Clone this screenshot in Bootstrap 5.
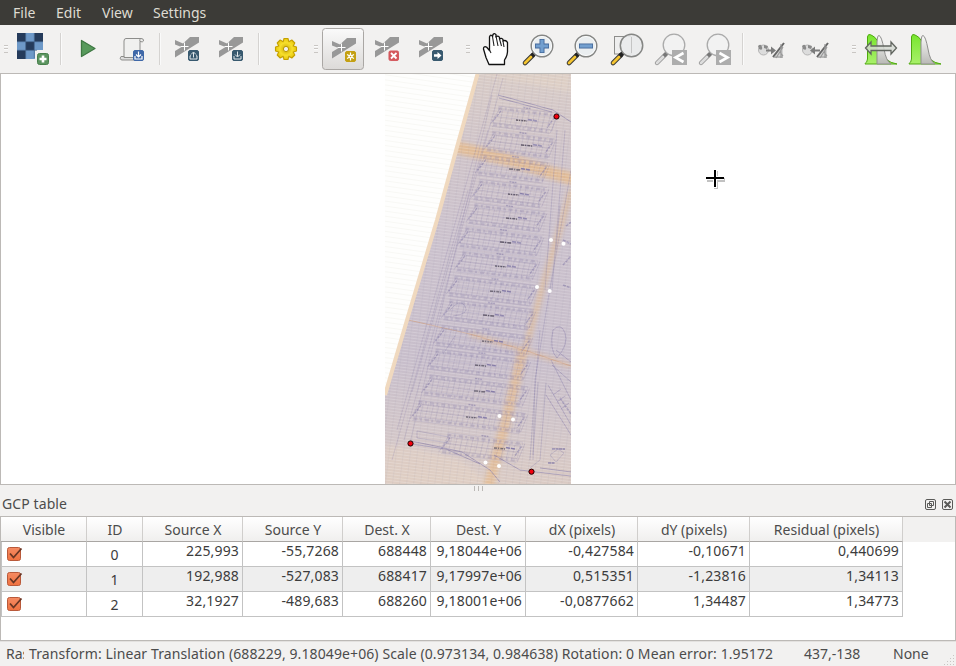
<!DOCTYPE html>
<html lang="en">
<head>
<meta charset="utf-8">
<title>Georeferencer</title>
<meta name="viewport" content="width=device-width, initial-scale=1">
<link href="https://cdn.jsdelivr.net/npm/bootstrap@5.3.0/dist/css/bootstrap.min.css" rel="stylesheet">
<style>
body{font-family:"Noto Sans","Open Sans",sans-serif;font-size:14px;line-height:20px;color:#4c4c4c;background:#f2f1f0;width:956px;height:666px;overflow:hidden}
.menu-strip{height:25px;background:#3c3b37;color:#dfdbd2;padding-left:13px;flex:none}
.menu-strip .nav-link{padding:0;color:inherit;line-height:25px;font-size:14px}
.menu-strip .nav-link:nth-child(1){width:43px}
.menu-strip .nav-link:nth-child(2){width:46px}
.menu-strip .nav-link:nth-child(3){width:51px}
.tools{height:48px;flex:none}
.tool{width:44px;height:48px;padding:0;border:0;border-radius:0;flex:none;line-height:0}
.tool svg{display:block}
.rule{width:11px;flex:none;padding-left:5px}
.rule::before{content:"";display:block;width:1px;height:32px;background:#d5d3d1;box-shadow:1px 0 #fafafa}
.grip{flex:none;height:8px;background:repeating-linear-gradient(#c9c6c3 0 1px,#fbfbfb 1px 2px,transparent 2px 3.5px);width:4px;margin:0 3px 0 4px}
.grip-b{margin-left:6px}
.grip-c{margin-left:13px}
.grip-d{margin:0 2px 0 16px}
.canvas-view{height:412px;flex:none;border:1px solid #bcb9b6;background:#fff;padding-left:384px}
.split{height:7px;flex:none;gap:2px;padding:1px 0 0 2px}
.split i{width:1px;height:5px;background:#bbb8b5;margin-right:1px}
.dock-title{height:24px;padding:0 3px 0 2px;flex:none;letter-spacing:.1px}
.gcp-box{height:125px;flex:none;border:1px solid #bcb9b6;background:#fff}
.gcp-head{background:#f2f1f0}
.gcp-table{width:902px;table-layout:fixed;margin:0;color:#3c3c3c;border-collapse:separate;border-spacing:0;--bs-table-bg:transparent}
.gcp-table th{height:25px;padding:1px 0 0 1px;font-weight:400;text-align:center;color:#4c4c4c;border:0;border-right:1px solid #d0cecc;border-bottom:1px solid #a9a6a3;background:linear-gradient(#fff,#f0efee);line-height:23px}
.gcp-table td{height:25px;padding:0 3px 0 0;text-align:right;vertical-align:top;line-height:17px;border:0;border-right:1px solid #c3c3c3;border-bottom:1px solid #c3c3c3;letter-spacing:.16px}
.gcp-table td:first-child{text-align:left;padding:4px 0 0 4px;border-left:1px solid #c3c3c3}
.gcp-table td:nth-child(2){text-align:center;padding:4px 0 0}
.gcp-table tr.alt td{background:#eee}
.status{height:25px;flex:none;border-top:1px solid #e3e1df;padding-left:6px}
.status span{white-space:pre;line-height:24px;flex:none}
.status .raster{width:18px}
.status .transform{margin-left:5px;width:775px;letter-spacing:.104px}
.status .coords{width:89px}
.cross{left:705px;top:169px}
</style>
</head>
<body class="d-flex flex-column position-relative">
<svg width="0" height="0" class="position-absolute">
 <defs>
  <linearGradient id="green" x2="0" y2="1"><stop stop-color="#78e62e"/><stop offset="1" stop-color="#a9f06a"/></linearGradient>
  <linearGradient id="silver" x2="0" y2="1"><stop stop-color="#fafafa"/><stop offset="1" stop-color="#b9b9b5"/></linearGradient>
  <linearGradient id="press" x2="0" y2="1"><stop stop-color="#fafafa"/><stop offset="1" stop-color="#dcdad8"/></linearGradient>
  <radialGradient id="gold"><stop stop-color="#c9a800"/><stop offset=".6" stop-color="#f7df2c"/><stop offset="1" stop-color="#e8c70c"/></radialGradient>
  <linearGradient id="orange" x2="0" y2="1"><stop stop-color="#f58b63"/><stop offset="1" stop-color="#f0713f"/></linearGradient>
  <symbol id="gcp" viewBox="0 0 24 24" overflow="visible">
   <path d="M15 0H24V5.500L0 20.500V14L6.500 10L0 7.500V3L8 6.500Z" fill="#989898"/><path d="M5.500 9.500H13.500M9.500 5.500V13.500" stroke="#fff" stroke-width="1"/>
  </symbol>
  <symbol id="badge" viewBox="0 0 11 11" overflow="visible"><rect x=".5" y=".5" width="10" height="10" rx="1.5" fill="currentColor" stroke="currentColor"/></symbol>
  <symbol id="lens" viewBox="0 0 44 48" overflow="visible">
   <path d="M16 30L8 38" stroke="#333" stroke-width="4.6" stroke-linecap="round"/><path d="M14 32L8 38" stroke="#f4c430" stroke-width="2.8" stroke-linecap="round"/><path d="M18 28L15 31" stroke="#222" stroke-width="4"/>
   <circle cx="25" cy="21" r="10.8" fill="#e9edf0" fill-opacity=".85" stroke="#858684" stroke-width="1.4"/><circle cx="25" cy="21" r="9.6" fill="none" stroke="#fff" stroke-opacity=".8"/>
  </symbol>
  <symbol id="lens-off" viewBox="0 0 44 48" overflow="visible">
   <path d="M17 29L8 38" stroke="#999" stroke-width="4.4" stroke-linecap="round"/><path d="M14 32L8 38" stroke="#ddd" stroke-width="2.6" stroke-linecap="round"/><path d="M18 28L15 31" stroke="#777" stroke-width="3.5"/>
   <circle cx="25" cy="20" r="10.8" fill="#f2f2f2" stroke="#aaa" stroke-width="1.3"/><rect x="23" y="25" width="15" height="15" fill="#adadad"/>
  </symbol>
  <symbol id="globe" viewBox="0 0 44 48" overflow="visible">
   <circle cx="15.5" cy="25" r="5" fill="#dcdcdc" stroke="#b4b4b4"/><path d="M10 21q3-3 4 1t-3 2zM16 20l4 1-1 3-3-1z" fill="#8a8a8a"/>
   <path d="M25 31L35 18V33H25Z" fill="#d4d4d4"/><path d="M25 32L36 18" stroke="#666" stroke-width="2"/><path d="M28 33L35 22M33 19V33M26 32H35M32 27l3 4" stroke="#999" stroke-width="1.2"/>
  </symbol>
  <symbol id="tick" viewBox="0 0 17 17" overflow="visible"><rect x="1.5" y="1.5" width="13" height="13" rx="2" fill="url(#orange)" stroke="#b9593a"/><path d="M4 7.5L7.5 11.5L15.5 2.5" fill="none" stroke="#673524" stroke-width="1.8"/></symbol>
 </defs>
</svg>

<nav class="nav menu-strip">
 <a class="nav-link">File</a><a class="nav-link">Edit</a><a class="nav-link">View</a><a class="nav-link">Settings</a>
</nav>

<div class="tools d-flex align-items-center" role="toolbar">
 <div class="grip"></div>
 <button class="btn tool"><svg width="44" height="48" viewBox="11 25 44 48">
  <path d="M17 33H43V50H35V59H17Z" fill="#6e99c8"/><path d="M17 33h8.700v8.700H17zM34.300 33H43v8.700h-8.700zM25.700 41.700h8.600v8.600h-8.600zM17 50.300h8.700V59H17z" fill="#253b5b"/><path d="M25.700 33V59M34.300 33V58M17 41.700H43M17 50.300H37" stroke="#47698f" stroke-width=".7"/>
  <rect x="37.500" y="53.500" width="11" height="11" rx="2" fill="#5c9460" stroke="#47804b"/><path d="M43 55.500v7M39.500 59h7" stroke="#fff" stroke-width="2.600"/></svg></button>
 <div class="rule"></div>
 <button class="btn tool"><svg width="44" height="48" viewBox="66 25 44 48"><path d="M81.500 40.500L95 48.500L81.500 56.500Z" fill="#589a5c" stroke="#3f7843" stroke-width="1.300" stroke-linejoin="round"/></svg></button>
 <button class="btn tool"><svg width="44" height="48" viewBox="110 25 44 48"><path d="M126 38.500H141q3 0 2.500 2.500-.7 1.500-3.500.5V58H124V41q0-2.500 2-2.500Z" fill="#f0f0ef" stroke="#8d8d8b"/><path d="M141 38.500q-2 1-1 3" fill="none" stroke="#8d8d8b"/><path d="M124 56.500H121q-2 3 1 3.500H139V57.500H124Z" fill="#ddd" stroke="#8d8d8b"/><g color="#3f68a8"><use href="#badge" x="133" y="50" width="11" height="11"/></g><path d="M138.500 51.500v5M136 54.500l2.500 2.500 2.500-2.500M135 56v3h7v-3" fill="none" stroke="#fff" stroke-width="1.200"/></svg></button>
 <div class="rule"></div>
 <button class="btn tool"><svg width="44" height="48" viewBox="165 25 44 48"><use href="#gcp" x="175" y="37" width="24" height="24"/><g color="#38596f"><use href="#badge" x="188" y="50" width="11" height="11"/></g><path d="M193.500 57.500v-5M191 54.500l2.500-2.500 2.500 2.500M191 55.800H190V59h7v-3.200H196" fill="none" stroke="#dfe6ea" stroke-width="1"/></svg></button>
 <button class="btn tool"><svg width="44" height="48" viewBox="209 25 44 48"><use href="#gcp" x="219" y="37" width="24" height="24"/><g color="#38596f"><use href="#badge" x="232" y="50" width="11" height="11"/></g><path d="M237.500 51.500v5M235 54.500l2.500 2.500 2.500-2.500M234 56v3h7v-3" fill="none" stroke="#dfe6ea" stroke-width="1"/></svg></button>
 <div class="rule"></div>
 <button class="btn tool"><svg width="44" height="48" viewBox="264 25 44 48"><g transform="translate(286 49)"><path d="M-2-10.500H2L2.800-7.300 5.800-9 8.800-6 7.200-3 10.500-2V2L7.200 3 8.800 6 5.800 9 2.800 7.300 2 10.500H-2L-2.800 7.300-5.800 9-8.800 6-7.200 3-10.500 2V-2L-7.200-3-8.800-6-5.800-9-2.800-7.300Z" fill="url(#gold)" stroke="#c4a000" stroke-width="1.100" stroke-linejoin="round"/><circle r="2.600" fill="#f2f1f0" stroke="#b89600"/></g></svg></button>
 <div class="grip grip-b"></div>
 <button class="btn tool"><svg width="44" height="48" viewBox="321 25 44 48"><rect x="322.500" y="28.500" width="41" height="41" rx="3" fill="url(#press)" stroke="#aaa7a4"/><use href="#gcp" x="332" y="38" width="24" height="24"/><g color="#c4a012"><use href="#badge" x="345" y="51" width="11" height="11"/></g><path d="M350.500 52.500v8M347 54.500l7 4M354 54.500l-7 4" stroke="#fff" stroke-width="1.200"/><circle cx="350.500" cy="56.500" r="2" fill="#fff"/><circle cx="350.500" cy="56.500" r=".8" fill="#c4a012"/></svg></button>
 <button class="btn tool"><svg width="44" height="48" viewBox="365 25 44 48"><use href="#gcp" x="375" y="37" width="24" height="24"/><g color="#d4585c"><use href="#badge" x="388.500" y="50.500" width="10.500" height="10.500"/></g><path d="M391 53l5.500 5.500M396.500 53L391 58.500" stroke="#fff" stroke-width="1.800"/></svg></button>
 <button class="btn tool"><svg width="44" height="48" viewBox="409 25 44 48"><use href="#gcp" x="419" y="37" width="24" height="24"/><g color="#38596f"><use href="#badge" x="432" y="50" width="11" height="11"/></g><path d="M434 54.300h3.500V52L441.500 55.500L437.500 59V56.700H434Z" fill="#fff"/></svg></button>
 <div class="grip grip-c"></div>
 <button class="btn tool"><svg width="44" height="48" viewBox="473 25 44 48"><path d="M489 64.500L486 57.500L483.500 49q-.2-3 3-2l3 3.500L489.500 37q1-3.500 3-.5L493 34.500q1.500-2 3 .2V37q2-2 3.500.3V39q2-1.500 3.500.5V41q3-1.500 4.500 1.500V49q.5 6-3 11V64.500Z" fill="#fff" stroke="#111" stroke-width="1.300" stroke-linejoin="round"/><path d="M492.500 36.500L494 46M496 36L498 46M499.500 39L501.500 46M503 41L504 47M489.500 50L491 53" stroke="#222" stroke-width="1.100"/></svg></button>
 <button class="btn tool"><svg width="44" height="48" viewBox="0 0 44 48"><use href="#lens" width="44" height="48"/><path d="M25 14v14M18 21h14" stroke="#44699b" stroke-width="5"/><path d="M25 14.800v12.400M18.800 21h12.400" stroke="#729fcf" stroke-width="3.200"/></svg></button>
 <button class="btn tool"><svg width="44" height="48" viewBox="0 0 44 48"><use href="#lens" width="44" height="48"/><path d="M18 21h14" stroke="#44699b" stroke-width="5"/><path d="M18.800 21h12.400" stroke="#729fcf" stroke-width="3.200"/></svg></button>
 <button class="btn tool"><svg width="44" height="48" viewBox="0 0 44 48"><rect x="9.500" y="11.500" width="17" height="17.500" fill="#eee" stroke="#8d8d8b"/><path d="M16 30L8 38" stroke="#333" stroke-width="4.600" stroke-linecap="round"/><path d="M14 32L8 38" stroke="#f4c430" stroke-width="2.800" stroke-linecap="round"/><path d="M18 28L15 31" stroke="#222" stroke-width="4"/><circle cx="26.500" cy="20.500" r="11.200" fill="#e9ebec" fill-opacity=".93" stroke="#858684" stroke-width="1.500"/><path d="M26.500 12v16" stroke="#c4c4c4"/></svg></button>
 <button class="btn tool"><svg width="44" height="48" viewBox="0 0 44 48"><use href="#lens-off" width="44" height="48"/><path d="M34.500 28L26.500 32.500L34.500 37" fill="none" stroke="#fff" stroke-width="2.600"/></svg></button>
 <button class="btn tool"><svg width="44" height="48" viewBox="0 0 44 48"><use href="#lens-off" width="44" height="48"/><path d="M26.500 28L34.500 32.500L26.500 37" fill="none" stroke="#fff" stroke-width="2.600"/></svg></button>
 <div class="rule"></div>
 <button class="btn tool"><svg width="44" height="48" viewBox="0 0 44 48"><use href="#globe" width="44" height="48"/><path d="M18 24.500h5v-3l5 4-5 4v-3h-5z" fill="#7c7c7c"/></svg></button>
 <button class="btn tool"><svg width="44" height="48" viewBox="0 0 44 48"><use href="#globe" width="44" height="48"/><path d="M28 24.500h-5v-3l-5 4 5 4v-3h5z" fill="#7c7c7c"/></svg></button>
 <div class="grip grip-d"></div>
 <button class="btn tool"><svg width="44" height="48" viewBox="858 25 44 48"><g id="histo"><path d="M865 63.500Q867 63 867.500 59V37Q868 33 872 35.500Q878 38 881 50Q884 62 897 64H865Z" fill="url(#green)" stroke="#4ea80f"/><path d="M877 64V42Q877.500 35 879 35.500Q881.500 36 884 49Q886 61 891 64Z" fill="url(#silver)" stroke="#8f8f8d"/></g><path d="M865.500 48L871 42V46H891V42L896.500 48L891 54V50.500H871V54Z" fill="#d5d9d2" fill-opacity=".85" stroke="#626660" stroke-width="1.300"/></svg></button>
 <button class="btn tool"><svg width="44" height="48" viewBox="858 25 44 48"><use href="#histo"/></svg></button>
</div>

<main class="canvas-view">
 <svg id="map" class="d-block" width="186" height="410" viewBox="385 74 186 410">
  <defs>
   <linearGradient id="paper" x1="0" y1="0" x2="0" y2="1"><stop stop-color="#d8cbc6"/><stop offset=".18" stop-color="#cfc3c8"/><stop offset=".42" stop-color="#cac0cc"/><stop offset=".7" stop-color="#c8becb"/><stop offset=".87" stop-color="#d1c5c8"/><stop offset="1" stop-color="#dacac3"/></linearGradient>
   <pattern id="weave" width="7" height="3" patternUnits="userSpaceOnUse" patternTransform="rotate(7)"><path d="M0 .5H7" stroke="#fff" stroke-opacity=".2"/><path d="M.5 0V3" stroke="#8f84a8" stroke-opacity=".08"/></pattern>
   <pattern id="faint" width="8" height="5" patternUnits="userSpaceOnUse" patternTransform="rotate(8)"><path d="M0 .5H8" stroke="#f6f6f3" stroke-width=".8"/></pattern>
   <filter id="soft"><feGaussianBlur stdDeviation="2"/></filter>
   <filter id="ink"><feGaussianBlur stdDeviation=".35"/></filter>
  </defs>
  <path d="M385 74H571V484H385Z" fill="url(#paper)"/>
  <path d="M478 74H571V92L500 78Z" fill="#e3d3c4" opacity=".5" filter="url(#soft)"/>
  <path d="M385 445L415 448L460 460L490 484H385Z" fill="#e6d3c2" opacity=".45" filter="url(#soft)"/>
  <g fill="none" stroke="#e6b988" filter="url(#soft)" opacity=".78">
   <path d="M452 146L520 163L575 180" stroke-width="12"/><path d="M571 190L561 225L544 282L525 350" stroke-width="6" opacity=".7"/><path d="M523 350L507 417L488 488" stroke-width="10" opacity=".85"/>
   <path d="M470 334L520 349L571 366" stroke-width="5" opacity=".6"/>
  </g>
  <path d="M404 319L470 334L530 352L571 366" fill="none" stroke="#cfa184" stroke-width="1" opacity=".7"/>
  <g id="plots" fill="none" stroke="#877da8" filter="url(#ink)"></g>
  <path d="M385 74H571V484H385Z" fill="url(#weave)"/>
  <path d="M385 74H477L456 147L436 220L406 320L385 393Z" fill="#fefefd"/><path d="M385 74H477L456 147L436 220L406 320L385 393Z" fill="url(#faint)"/>
  <path d="M477.500 74L457 147L437 220L407 320L385 395" fill="none" stroke="#f0d9bf" stroke-width="4"/>
  <g fill="#fff"><circle cx="551" cy="240" r="2"/><circle cx="563.500" cy="243.700" r="2"/><circle cx="537" cy="287" r="2"/><circle cx="549.700" cy="291" r="2"/><circle cx="499.500" cy="416" r="2"/><circle cx="513" cy="419.500" r="2"/><circle cx="485.500" cy="462.500" r="2"/><circle cx="499" cy="466" r="2"/></g>
  <g fill="#f2000d" stroke="#1a0000"><circle cx="556.500" cy="116.500" r="2.600"/><circle cx="410.500" cy="443.500" r="2.600"/><circle cx="531.500" cy="471.700" r="2.600"/></g>
 </svg>
</main>
<div class="split d-flex justify-content-center"><i></i><i></i><i></i></div>
<div class="dock-title d-flex align-items-center">
 <span class="me-auto">GCP table</span>
 <svg width="28" height="11" viewBox="0 0 28 11" fill="none" stroke="#5a5a58"><rect x=".5" y=".5" width="10" height="10" rx="1.500"/><path d="M4.500 2.500h4v4h-4zM2.500 4.500h4v4h-4z"/><rect x="17.500" y=".5" width="10" height="10" rx="1.500"/><path d="M19.500 2.500l6 6M25.500 2.500l-6 6" stroke-width="2"/></svg>
</div>
<section class="gcp-box">
 <div class="gcp-head">
 <table class="table gcp-table">
  <colgroup><col style="width:86px"><col style="width:56px"><col style="width:100px"><col style="width:100px"><col style="width:88px"><col style="width:95px"><col style="width:112px"><col style="width:112px"><col style="width:153px"></colgroup>
  <thead><tr><th>Visible</th><th>ID</th><th>Source X</th><th>Source Y</th><th>Dest. X</th><th>Dest. Y</th><th>dX (pixels)</th><th>dY (pixels)</th><th>Residual (pixels)</th></tr></thead>
 </table>
 </div>
 <table class="table gcp-table">
  <colgroup><col style="width:86px"><col style="width:56px"><col style="width:100px"><col style="width:100px"><col style="width:88px"><col style="width:95px"><col style="width:112px"><col style="width:112px"><col style="width:153px"></colgroup>
  <tbody>
   <tr><td><svg class="d-block" width="17" height="17"><use href="#tick"/></svg></td><td>0</td><td>225,993</td><td>-55,7268</td><td>688448</td><td>9,18044e+06</td><td>-0,427584</td><td>-0,10671</td><td>0,440699</td></tr>
   <tr class="alt"><td><svg class="d-block" width="17" height="17"><use href="#tick"/></svg></td><td>1</td><td>192,988</td><td>-527,083</td><td>688417</td><td>9,17997e+06</td><td>0,515351</td><td>-1,23816</td><td>1,34113</td></tr>
   <tr><td><svg class="d-block" width="17" height="17"><use href="#tick"/></svg></td><td>2</td><td>32,1927</td><td>-489,683</td><td>688260</td><td>9,18001e+06</td><td>-0,0877662</td><td>1,34487</td><td>1,34773</td></tr>
  </tbody>
 </table>
</section>
<footer class="status d-flex">
 <span class="raster overflow-hidden">Ras</span><span class="transform">Transform: Linear Translation (688229, 9.18049e+06) Scale (0.973134, 0.984638) Rotation: 0 Mean error: 1.95172</span><span class="coords">437,-138</span><span>None</span>
 <svg class="ms-auto align-self-end" width="12" height="12" fill="#c9c6c3"><path d="M9 1h1v1H9zM6 4h1v1H6zM9 4h1v1H9zM3 7h1v1H3zM6 7h1v1H6zM9 7h1v1H9zM0 10h1v1H0zM3 10h1v1H3zM6 10h1v1H6zM9 10h1v1H9z"/></svg>
</footer>
<svg class="cross position-absolute" width="22" height="22"><path d="M11 2V20M2 11H20" stroke="#999" stroke-opacity=".6" stroke-width="4"/><path d="M10 0V19M0 9H19" stroke="#fff" stroke-width="4"/><path d="M10 1V18M1 9H19" stroke="#000" stroke-width="2"/></svg>

<script src="https://cdn.jsdelivr.net/npm/bootstrap@5.3.0/dist/js/bootstrap.bundle.min.js"></script>
<script>
// City blocks: left x, right x, centre y, label x
const blocks = [[497,555,120,522],[491,553,145,527],[482,547,169,515],[478,546,194,514],[473,544,218,512],[464,541,242,506],[461,537,266,501],[453,535,291,496],[448,533,315,489],[440,530,341,488],[434,528,365,481],[428,527,391,480],[417,525,417,472],[446,522,448,500]];
let out = '';
const line = (d, w, o, extra = '') => { out += `<path d="${d}" stroke-width="${w}" opacity="${o}" ${extra}/>`; };
blocks.forEach(([l, r, y, t], i) => {
  const h = 8.5, m = (l + r) / 2;
  out += `<g transform="rotate(7 ${m} ${y})">`;
  line(`M${l} ${y-h}H${r}M${l-3} ${y+h}H${r-3}`, 3, .3, 'stroke-dasharray="4 2.5 2 3"');
  line(`M${l} ${y-h-2}H${r}M${l} ${y-h+2}H${r}M${l-3} ${y}H${r-3}M${l-4} ${y+h-2}H${r-4}M${l-4} ${y+h+2}H${r-4}`, .5, .4);
  let v = '';
  for (let x = l + 5; x < r; x += 5.3) v += `M${x} ${y-h}L${x-2} ${y+h}`;
  line(v, .5, .4);
  line(`M${l+3} ${y-6}L${l-4} ${y+6}M${r-1} ${y-6}L${r-7} ${y+5}`, 1.4, .6, 'stroke-dasharray="3 1"');
  line(`M${l+2} ${y-9}L${l-6} ${y+9}M${r+2} ${y-9}L${r-3} ${y+9}`, .6, .45);
  line(`M${m-4} ${y-12}h7`, 1.5, .6, 'stroke-dasharray="2 .6"');
  out += '</g>';
  out += `<path d="M${t-6} ${y}l11 1" stroke="#3a3545" stroke-width="1.5" stroke-dasharray="${2 + i % 3} .8 1.5 1" opacity=".7"/><path d="M${t+6} ${y-.5}l9 1.5" stroke-width="1.5" stroke-dasharray="4 1"/>`;
});
// Streets along the slanted edge, outer parcels and the river road
line('M497 74L397 430M503 78L404 440M488 130L412 392M468 190L392 460M492 95L410 443', .5, .5);
line('M498 95L553 110L571 122M499 98L552 112M411 441L440 447L462 452L490 470L500 482M412 444L446 449L480 464M494 455L520 470L571 476M540 468L571 472', .9, .7);
line('M557 130L545 290M565 130L552 290M571 170L548 300L535 380L533 460M560 205L556 250M540 330L534 400L530 460M546 383L540 460L530 468M538 382L533 455', .7, .5);
line('M553 330q8-8 12 3t-8 25q-8-8-4-28M556 350L571 362M551 360L571 400M548 385L571 425M546 395L571 435M552 365L571 382M553 395l8-6M557 402l8-6M561 409l8-6', .8, .6);
line('M560 398L571 414M566 226L571 222M563 240L571 244M563 265L571 256M563 285L571 288', 1.6, .6, 'stroke-dasharray="3 1"');
line('M552 449h13M548 463h7', 2, .7, 'stroke-dasharray="3 .5"');
line('M550 455l8-6 6 4-8 9zM417 431l32 6v6l-32-5zM455 336l-12 18M450 310q10-12 15-4t-12 10', .6, .6);
document.getElementById('plots').innerHTML = out;
</script>
</body>
</html>
